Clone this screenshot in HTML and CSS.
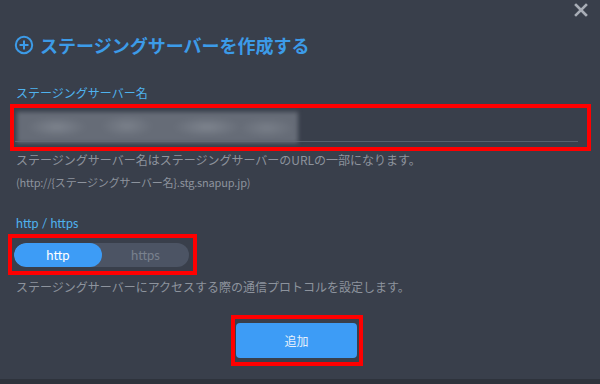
FILE: index.html
```html
<!DOCTYPE html>
<html lang="ja">
<head>
<meta charset="utf-8">
<title>ステージングサーバーを作成する</title>
<link rel="stylesheet" href="styles.css">
</head>
<body>
<div class="modal">
  <button class="close" aria-label="閉じる">
    <svg viewBox="0 0 14 14" width="14" height="14"><path d="M2 2 L12 12 M12 2 L2 12" stroke="#a8adb6" stroke-width="2.6" stroke-linecap="square"/></svg>
  </button>
  <h1 class="title">
    <svg class="title-icon" viewBox="0 0 20 20" width="20" height="20"><circle cx="10" cy="10" r="8.2" fill="none" stroke="#3c9be8" stroke-width="2"/><path d="M10 5.5 V14.5 M5.5 10 H14.5" stroke="#3c9be8" stroke-width="2"/></svg>
    <span>ステージングサーバーを作成する</span>
  </h1>
  <div class="label label-name">ステージングサーバー名</div>
  <div class="mark mark-input">
    <div class="field">
      <div class="blurred"></div>
    </div>
  </div>
  <p class="help help-1">ステージングサーバー名はステージングサーバーのURLの一部になります。</p>
  <p class="help help-2">(http://{ステージングサーバー名}.stg.snapup.jp)</p>
  <div class="label label-proto">http / https</div>
  <div class="mark mark-toggle">
    <div class="toggle">
      <span class="seg seg-on">http</span>
      <span class="seg seg-off">https</span>
    </div>
  </div>
  <p class="help help-3">ステージングサーバーにアクセスする際の通信プロトコルを設定します。</p>
  <div class="mark mark-button">
    <button class="add">追加</button>
  </div>
  <div class="footer-strip"></div>
</div>
</body>
</html>
```

FILE: styles.css
```css
html, body {
  margin: 0;
  padding: 0;
  height: 384px;
  overflow: hidden;
  background: #393f4b;
  font-family: "Noto Sans CJK JP", "Noto Sans", sans-serif;
}

.modal {
  position: relative;
  width: 600px;
  height: 384px;
  padding-top: 33px;
  box-sizing: border-box;
  display: flex;
  flex-direction: column;
  align-items: flex-start;
}

.close {
  position: absolute;
  top: 3px;
  right: 12px;
  width: 14px;
  height: 14px;
  padding: 0;
  border: 0;
  background: none;
  display: flex;
}

.title {
  margin: 0 0 0 14px;
  height: 24px;
  display: flex;
  align-items: center;
  gap: 6px;
  font-size: 18px;
  font-weight: bold;
  color: #3c9be8;
  line-height: 24px;
  letter-spacing: 0;
}

.title-icon {
  flex: none;
}

.label {
  font-size: 12px;
  line-height: 16px;
  color: #4fb2ee;
  margin-left: 16px;
}

.label-name {
  margin-top: 28px;
}

.label-proto {
  margin-top: 26px;
  font-family: "Lato", "Noto Sans CJK JP", sans-serif;
  font-size: 12.5px;
}

.mark {
  border: 4px solid #ff0000;
  box-sizing: border-box;
}

.mark-input {
  margin: 3px 0 0 10px;
  width: 581px;
  height: 47px;
}

.field {
  margin-left: 1px;
  width: 563px;
  height: 34px;
  padding: 4px 0 0 2px;
  box-sizing: border-box;
  border-bottom: 1px solid #59616d;
}

.blurred {
  width: 281px;
  height: 31px;
  background:
    radial-gradient(ellipse 30px 10px at 40px 15px, #7d838d, transparent),
    radial-gradient(ellipse 26px 11px at 110px 14px, #7a808a, transparent),
    radial-gradient(ellipse 34px 10px at 190px 15px, #7e848e, transparent),
    radial-gradient(ellipse 28px 10px at 250px 16px, #787e88, transparent),
    #666c77;
  filter: blur(2px);
}

.help {
  margin: 0 0 0 16px;
  color: #8d939d;
  font-size: 12px;
  line-height: 16px;
}

.help-1 {
  margin-top: 1px;
}

.help-2 {
  margin-top: 6px;
  font-size: 11px;
  letter-spacing: -0.2px;
}

.mark-toggle {
  margin: 2px 0 0 8px;
  width: 189px;
  height: 41px;
  padding: 5px 0 0 2px;
}

.toggle {
  width: 175px;
  height: 24px;
  border-radius: 12px;
  background: #4c5464;
  display: flex;
  overflow: hidden;
  font-family: "Lato", "Noto Sans", sans-serif;
  font-size: 13px;
}

.seg {
  display: flex;
  align-items: center;
  justify-content: center;
  height: 24px;
}

.seg-on {
  width: 88px;
  background: #3d9cf6;
  color: #ffffff;
  border-radius: 12px;
}

.seg-off {
  flex: 1;
  color: #79818e;
}

.help-3 {
  margin-top: 4px;
}

.mark-button {
  margin: 20px 0 0 231px;
  width: 132px;
  height: 51px;
  padding: 4px 0 0 1px;
}

.add {
  display: block;
  width: 121px;
  height: 35px;
  border: 0;
  border-radius: 4px;
  background: #3d9cf6;
  color: #e6f0fb;
  font-family: "Noto Sans CJK JP", sans-serif;
  font-size: 12px;
  padding: 0;
}

.footer-strip {
  margin-top: 13px;
  width: 600px;
  flex: 1;
  background: #2e333c;
}
```
